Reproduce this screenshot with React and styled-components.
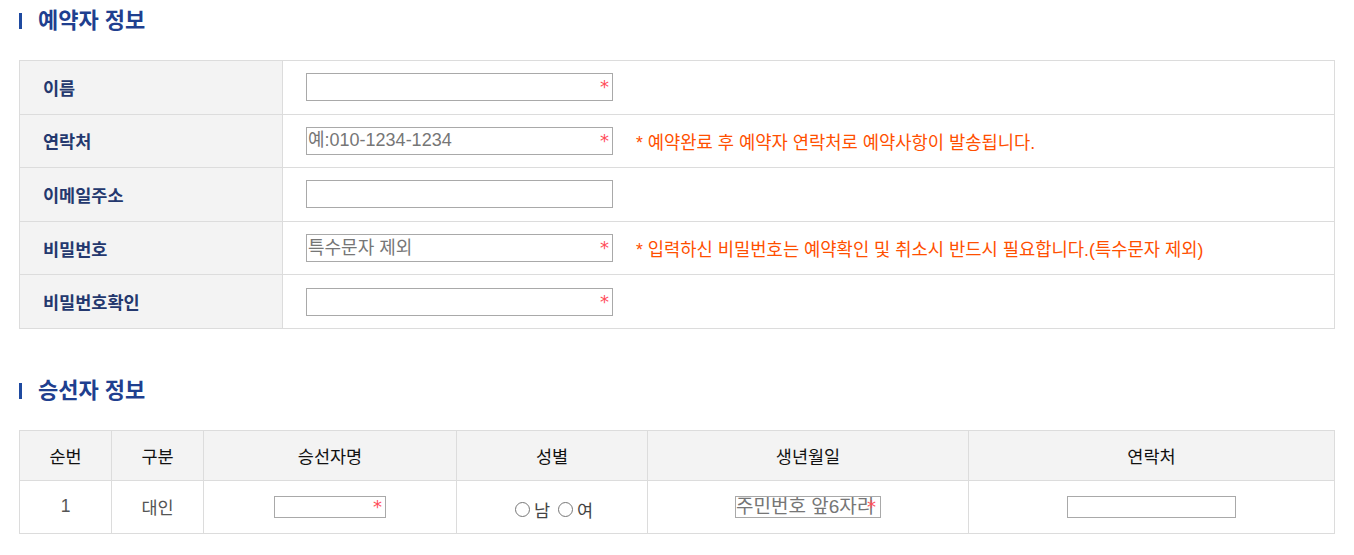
import React from 'react';
import styled, { createGlobalStyle } from 'styled-components';

const GlobalStyle = createGlobalStyle`
  body {
    margin: 0;
    background: #fff;
    font-family: "Liberation Sans", "Noto Sans CJK KR", sans-serif;
  }
`;

const booker = [
  { label: '이름', required: true },
  { label: '연락처', required: true, placeholder: '예:010-1234-1234', note: '* 예약완료 후 예약자 연락처로 예약사항이 발송됩니다.' },
  { label: '이메일주소' },
  { label: '비밀번호', required: true, placeholder: '특수문자 제외', note: '* 입력하신 비밀번호는 예약확인 및 취소시 반드시 필요합니다.(특수문자 제외)' },
  { label: '비밀번호확인', required: true },
];

const columns = [
  { title: '순번', width: 92 },
  { title: '구분', width: 92 },
  { title: '승선자명', width: 253 },
  { title: '성별', width: 191 },
  { title: '생년월일', width: 321 },
  { title: '연락처' },
];

export default function App() {
  return (
    <Page>
      <GlobalStyle />
      <SectionTitle>예약자 정보</SectionTitle>
      <FormTable>
        <colgroup>
          <col style={{ width: 263 }} />
          <col />
        </colgroup>
        <tbody>
          {booker.map((row) => (
            <tr key={row.label}>
              <LabelCell>{row.label}</LabelCell>
              <FieldCell>
                <FieldLine>
                  <InputWrap $width={307} $height={28}>
                    <TextInput placeholder={row.placeholder} $size={18} />
                    {row.required && <Star $top={5}>*</Star>}
                  </InputWrap>
                  {row.note && <Note>{row.note}</Note>}
                </FieldLine>
              </FieldCell>
            </tr>
          ))}
        </tbody>
      </FormTable>

      <SectionTitle $gap>승선자 정보</SectionTitle>
      <GridTable>
        <colgroup>
          {columns.map((c) => (
            <col key={c.title} style={c.width ? { width: c.width } : undefined} />
          ))}
        </colgroup>
        <thead>
          <tr>
            {columns.map((c) => (
              <HeadCell key={c.title}>{c.title}</HeadCell>
            ))}
          </tr>
        </thead>
        <tbody>
          <tr>
            <BodyCell>1</BodyCell>
            <BodyCell>대인</BodyCell>
            <BodyCell>
              <InputWrap $width={112} $height={22}>
                <TextInput $size={16} />
                <Star $top={2}>*</Star>
              </InputWrap>
            </BodyCell>
            <BodyCell>
              <Gender>
                <Radio />남<Radio />여
              </Gender>
            </BodyCell>
            <BodyCell>
              <InputWrap $width={146} $height={22}>
                <TextInput placeholder="주민번호 앞6자리" $size={19} $pad={0} />
                <Star $top={2} $right={5}>*</Star>
              </InputWrap>
            </BodyCell>
            <BodyCell>
              <InputWrap $width={169} $height={22}>
                <TextInput $size={16} />
              </InputWrap>
            </BodyCell>
          </tr>
        </tbody>
      </GridTable>
    </Page>
  );
}

const Page = styled.div`
  padding: 8px 19px 20px;
`;

const SectionTitle = styled.h2`
  position: relative;
  margin: ${(p) => (p.$gap ? '49px' : '0')} 0 26px;
  padding-left: 19px;
  font-size: 22px;
  line-height: 26px;
  font-weight: 700;
  color: #1f3f8f;

  &::before {
    content: '';
    position: absolute;
    left: 0;
    top: 5px;
    width: 3px;
    height: 16px;
    background: #1f4aa0;
  }
`;

const FormTable = styled.table`
  width: 100%;
  border-collapse: collapse;
  table-layout: fixed;
  border: 1px solid #dcdcdc;

  td {
    border: 1px solid #dcdcdc;
    height: 52.6px;
    padding: 0;
  }
`;

const LabelCell = styled.td`
  background: #f3f3f3;
  padding-left: 23px !important;
  font-size: 17.5px;
  font-weight: 700;
  color: #24386e;
`;

const FieldCell = styled.td`
  padding-left: 23px !important;
`;

const FieldLine = styled.div`
  display: flex;
  align-items: center;
  gap: 23px;
`;

const InputWrap = styled.span`
  position: relative;
  display: inline-flex;
  width: ${(p) => p.$width}px;
  height: ${(p) => p.$height}px;
  vertical-align: middle;
`;

const TextInput = styled.input.attrs({ type: 'text' })`
  box-sizing: border-box;
  width: 100%;
  height: 100%;
  border: 1px solid #a9a9a9;
  padding: 0 ${(p) => (p.$pad ?? 1)}px;
  font-family: "Liberation Sans", "Noto Sans CJK KR", sans-serif;
  font-size: ${(p) => p.$size}px;
  color: #333;
  background: #fff;
  outline: none;

  &::placeholder {
    color: #767676;
  }
`;

const Star = styled.span`
  position: absolute;
  right: ${(p) => p.$right ?? 4}px;
  top: ${(p) => p.$top}px;
  color: #ff4d5a;
  font-family: "DejaVu Sans", sans-serif;
  font-size: 18px;
  line-height: 18px;
  pointer-events: none;
`;

const Note = styled.span`
  color: #ff4f00;
  font-size: 17.7px;
`;

const GridTable = styled.table`
  width: 100%;
  border-collapse: collapse;
  table-layout: fixed;
  border: 1px solid #dcdcdc;
`;

const HeadCell = styled.th`
  height: 49px;
  padding: 0;
  border: 1px solid #dcdcdc;
  background: #f3f3f3;
  font-size: 17.5px;
  font-weight: 400;
  color: #111;
  text-align: center;
`;

const BodyCell = styled.td`
  height: 52px;
  padding: 0;
  border: 1px solid #dcdcdc;
  font-size: 17.5px;
  color: #555;
  text-align: center;
`;

const Gender = styled.span`
  display: inline-flex;
  align-items: center;
  gap: 4px;
  font-size: 17.5px;
  color: #444;
  padding-top: 6px;
`;

const Radio = styled.span`
  display: inline-block;
  box-sizing: border-box;
  width: 15px;
  height: 15px;
  border: 1px solid #777;
  border-radius: 50%;
  background: #fff;
  margin-left: 4px;
`;
